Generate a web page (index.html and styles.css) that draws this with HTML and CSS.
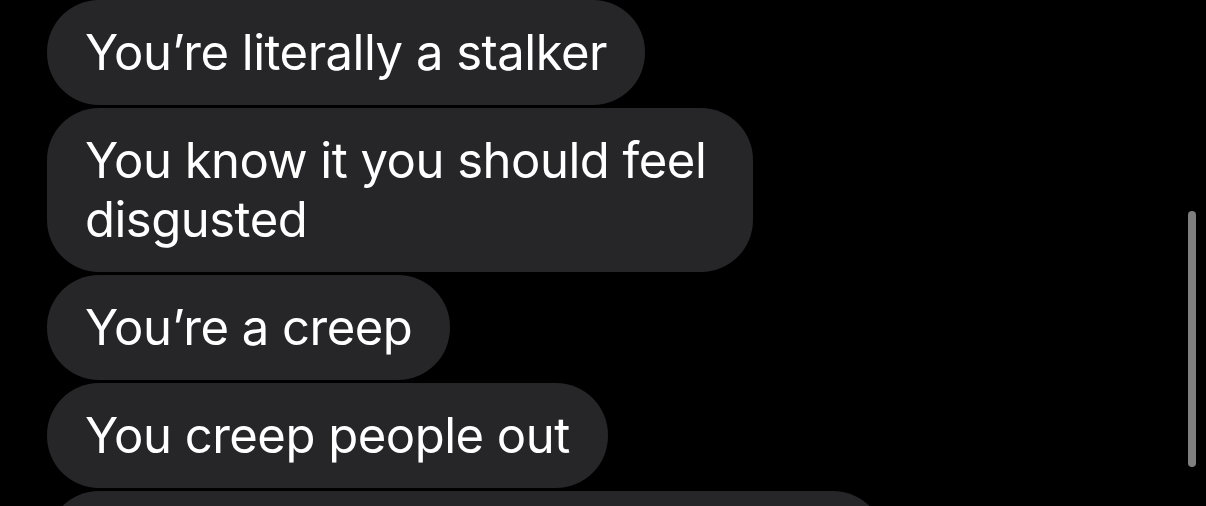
FILE: index.html
```html
<!DOCTYPE html>
<html>
<head>
<meta charset="utf-8">
<link rel="stylesheet" href="styles.css">
</head>
<body>
<div class="thread">
  <div class="bubble">You’re literally a stalker</div>
  <div class="bubble bubble-wrap">You know it you should feel<br>disgusted</div>
  <div class="bubble">You’re a creep</div>
  <div class="bubble">You creep people out</div>
  <div class="bubble bubble-cut" aria-hidden="true">&nbsp;</div>
</div>
<div class="scrollbar"></div>
</body>
</html>
```
FILE: styles.css
```css
html, body {
  margin: 0;
  padding: 0;
  background: #000;
  width: 1206px;
  height: 506px;
  overflow: hidden;
}
.thread {
  display: flex;
  flex-direction: column;
  align-items: flex-start;
  gap: 3px;
  padding: 0 0 0 47px;
}
.bubble {
  background: #262629;
  color: #fff;
  font-family: Inter, "Noto Sans", sans-serif;
  font-size: 49px;
  line-height: 59px;
  letter-spacing: -0.5px;
  padding: 23px 38px 23px 38px;
  border-radius: 52px;
}
.bubble-wrap {
  padding-right: 47px;
}
.bubble-cut {
  width: 762px;
}
.scrollbar {
  position: absolute;
  left: 1188px;
  top: 211px;
  width: 8px;
  height: 256px;
  border-radius: 4px;
  background: #7f7f7f;
}
```
